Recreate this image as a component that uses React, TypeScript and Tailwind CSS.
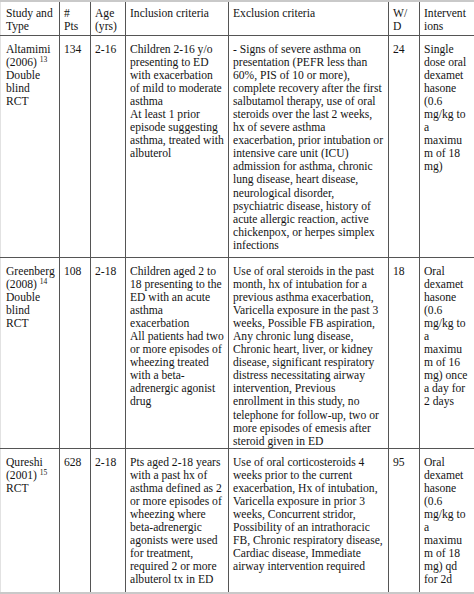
// Clinical trials summary table — dexamethasone in pediatric asthma

type Row = {
  study: React.ReactNode;
  pts: string;
  age: string;
  inclusion: string[];
  exclusion: string[];
  wd: string;
  interventions: string[];
  height: string;
  last?: boolean;
};

const COLS = 'grid grid-cols-[59px_31px_35px_103px_160px_31px_55px]';

function Lines({ lines }: { lines: string[] }) {
  return (
    <>
      {lines.map((l, i) => (
        <div key={i} className="whitespace-nowrap">
          {l}
        </div>
      ))}
    </>
  );
}

function Study({ name, year, ref, type }: { name: string; year: string; ref: string; type: string[] }) {
  return (
    <>
      <div>{name}</div>
      <div className="whitespace-nowrap">
        {year} <sup className="text-[7.5px]">{ref}</sup>
      </div>
      <Lines lines={type} />
    </>
  );
}

const ROWS: Row[] = [
  {
    study: <Study name="Altamimi" year="(2006)" ref="13" type={['Double', 'blind', 'RCT']} />,
    pts: '134',
    age: '2-16',
    inclusion: [
      'Children 2-16 y/o',
      'presenting to ED',
      'with exacerbation',
      'of mild to moderate',
      'asthma',
      'At least 1 prior',
      'episode suggesting',
      'asthma, treated with',
      'albuterol',
    ],
    exclusion: [
      '- Signs of severe asthma on',
      'presentation (PEFR less than',
      '60%, PIS of 10 or more),',
      'complete recovery after the first',
      'salbutamol therapy, use of oral',
      'steroids over the last 2 weeks,',
      'hx of severe asthma',
      'exacerbation, prior intubation or',
      'intensive care unit (ICU)',
      'admission for asthma, chronic',
      'lung disease, heart disease,',
      'neurological disorder,',
      'psychiatric disease, history of',
      'acute allergic reaction, active',
      'chickenpox, or herpes simplex',
      'infections',
    ],
    wd: '24',
    interventions: ['Single', 'dose oral', 'dexamet', 'hasone', '(0.6', 'mg/kg to', 'a', 'maximu', 'm of 18', 'mg)'],
    height: 'h-[222px]',
  },
  {
    study: <Study name="Greenberg" year="(2008)" ref="14" type={['Double', 'blind', 'RCT']} />,
    pts: '108',
    age: '2-18',
    inclusion: [
      'Children aged 2 to',
      '18 presenting to the',
      'ED with an acute',
      'asthma',
      'exacerbation',
      'All patients had two',
      'or more episodes of',
      'wheezing treated',
      'with a beta-',
      'adrenergic agonist',
      'drug',
    ],
    exclusion: [
      'Use of oral steroids in the past',
      'month, hx of intubation for a',
      'previous asthma exacerbation,',
      'Varicella exposure in the past 3',
      'weeks, Possible FB aspiration,',
      'Any chronic lung disease,',
      'Chronic heart, liver, or kidney',
      'disease, significant respiratory',
      'distress necessitating airway',
      'intervention, Previous',
      'enrollment in this study, no',
      'telephone for follow-up, two or',
      'more episodes of emesis after',
      'steroid given in ED',
    ],
    wd: '18',
    interventions: [
      'Oral',
      'dexamet',
      'hasone',
      '(0.6',
      'mg/kg to',
      'a',
      'maximu',
      'm of 16',
      'mg) once',
      'a day for',
      '2 days',
    ],
    height: 'h-[191px]',
  },
  {
    study: <Study name="Qureshi" year="(2001)" ref="15" type={['RCT']} />,
    pts: '628',
    age: '2-18',
    inclusion: [
      'Pts aged 2-18 years',
      'with a past hx of',
      'asthma defined as 2',
      'or more episodes of',
      'wheezing where',
      'beta-adrenergic',
      'agonists were used',
      'for treatment,',
      'required 2 or more',
      'albuterol tx in ED',
    ],
    exclusion: [
      'Use of oral corticosteroids 4',
      'weeks prior to the current',
      'exacerbation, Hx of intubation,',
      'Varicella exposure in prior 3',
      'weeks, Concurrent stridor,',
      'Possibility of an intrathoracic',
      'FB, Chronic respiratory disease,',
      'Cardiac disease, Immediate',
      'airway intervention required',
    ],
    wd: '95',
    interventions: ['Oral', 'dexamet', 'hasone', '(0.6', 'mg/kg to', 'a', 'maximu', 'm of 18', 'mg) qd', 'for 2d'],
    height: 'h-[143px]',
    last: true,
  },
];

const cell = 'border-l border-[#555] pl-[4px] pt-[7px] overflow-hidden';

export default function App() {
  return (
    <div
      className="w-[474px] h-[594px] bg-white text-[#141414] text-[11.6px] leading-[13.05px] overflow-hidden border-t-2 border-b-2 border-[#c9c9c9]"
      style={{ fontFamily: '"Liberation Serif", "Times New Roman", serif' }}
    >
      {/* header */}
      <div className={`${COLS} h-[34px] border-b border-[#555]`}>
        <div className="border-l border-[#e2e2e2] pl-[5px] pt-[5px]">
          <div>Study and</div>
          <div>Type</div>
        </div>
        <div className="border-l border-[#555] pl-[4px] pt-[5px]">
          <div>#</div>
          <div>Pts</div>
        </div>
        <div className="border-l border-[#555] pl-[4px] pt-[5px]">
          <div>Age</div>
          <div>(yrs)</div>
        </div>
        <div className="border-l border-[#555] pl-[4px] pt-[5px]">Inclusion criteria</div>
        <div className="border-l border-[#555] pl-[4px] pt-[5px]">Exclusion criteria</div>
        <div className="border-l border-[#555] pl-[4px] pt-[5px]">
          <div>W/</div>
          <div>D</div>
        </div>
        <div className="border-l border-[#555] pl-[4px] pt-[5px]">
          <div>Intervent</div>
          <div>ions</div>
        </div>
      </div>

      {ROWS.map((r, i) => (
        <div key={i} className={`${COLS} ${r.height} ${r.last ? '' : 'border-b border-[#555]'}`}>
          <div className="border-l border-[#e2e2e2] pl-[5px] pt-[7px]">{r.study}</div>
          <div className={cell}>{r.pts}</div>
          <div className={cell}>{r.age}</div>
          <div className={cell}>
            <Lines lines={r.inclusion} />
          </div>
          <div className={cell}>
            <Lines lines={r.exclusion} />
          </div>
          <div className={cell}>{r.wd}</div>
          <div className={cell}>
            <Lines lines={r.interventions} />
          </div>
        </div>
      ))}
    </div>
  );
}
